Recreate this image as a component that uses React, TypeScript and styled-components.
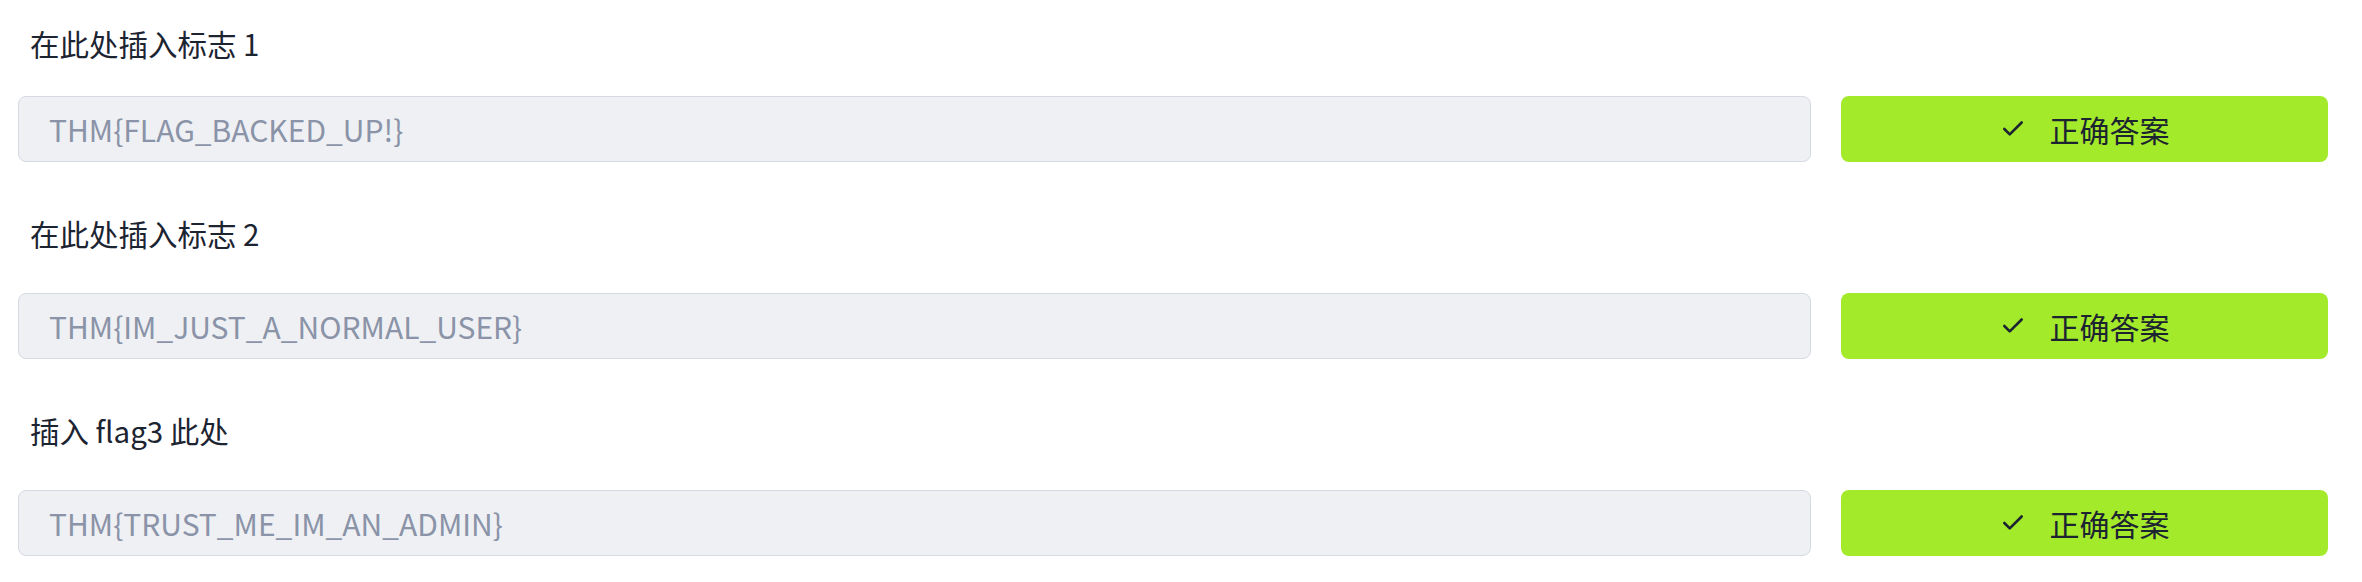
import styled, { createGlobalStyle } from 'styled-components'
import { Check } from 'lucide-react'

const GlobalStyle = createGlobalStyle`
  html, body {
    margin: 0;
    padding: 0;
    background: #ffffff;
  }
  body {
    font-family: "Noto Sans CJK SC", "Noto Sans", sans-serif;
    color: #1c2331;
  }
`

const QuestionList = styled.div`
  display: flex;
  flex-direction: column;
  gap: 51px;
  padding: 23px 34px 0 18px;
`

const Question = styled.div`
  display: flex;
  flex-direction: column;
  gap: 40px;

  &:first-child {
    gap: 33px;
  }
`

const Label = styled.div`
  font-size: 29.5px;
  line-height: 40px;
  padding-left: 12px;
  color: #1c2331;
`

const AnswerRow = styled.div`
  display: flex;
  align-items: stretch;
  gap: 30px;
`

const AnswerInput = styled.input`
  flex: 1;
  box-sizing: border-box;
  height: 66px;
  padding: 0 30px;
  border: 1.5px solid #d5d9e1;
  border-radius: 8px;
  background: #eef0f4;
  font-family: "Noto Sans CJK SC", "Noto Sans", sans-serif;
  font-size: 30px;
  color: #8a93a7;
  outline: none;

  &:disabled {
    color: #8a93a7;
    -webkit-text-fill-color: #8a93a7;
  }
`

const CorrectButton = styled.button`
  width: 487px;
  height: 66px;
  display: flex;
  align-items: center;
  justify-content: center;
  gap: 24px;
  border: none;
  border-radius: 8px;
  background: #a3ea2a;
  color: #1c2331;
  font-family: "Noto Sans CJK SC", "Noto Sans", sans-serif;
  font-size: 30px;
  cursor: default;
`

const questions = [
  { label: '在此处插入标志 1', answer: 'THM{FLAG_BACKED_UP!}' },
  { label: '在此处插入标志 2', answer: 'THM{IM_JUST_A_NORMAL_USER}' },
  { label: '插入 flag3 此处', answer: 'THM{TRUST_ME_IM_AN_ADMIN}' },
]

export default function App() {
  return (
    <>
      <GlobalStyle />
      <QuestionList>
        {questions.map((q) => (
          <Question key={q.label}>
            <Label>{q.label}</Label>
            <AnswerRow>
              <AnswerInput value={q.answer} disabled readOnly />
              <CorrectButton type="button">
                <Check size={26} strokeWidth={2.4} />
                正确答案
              </CorrectButton>
            </AnswerRow>
          </Question>
        ))}
      </QuestionList>
    </>
  )
}
